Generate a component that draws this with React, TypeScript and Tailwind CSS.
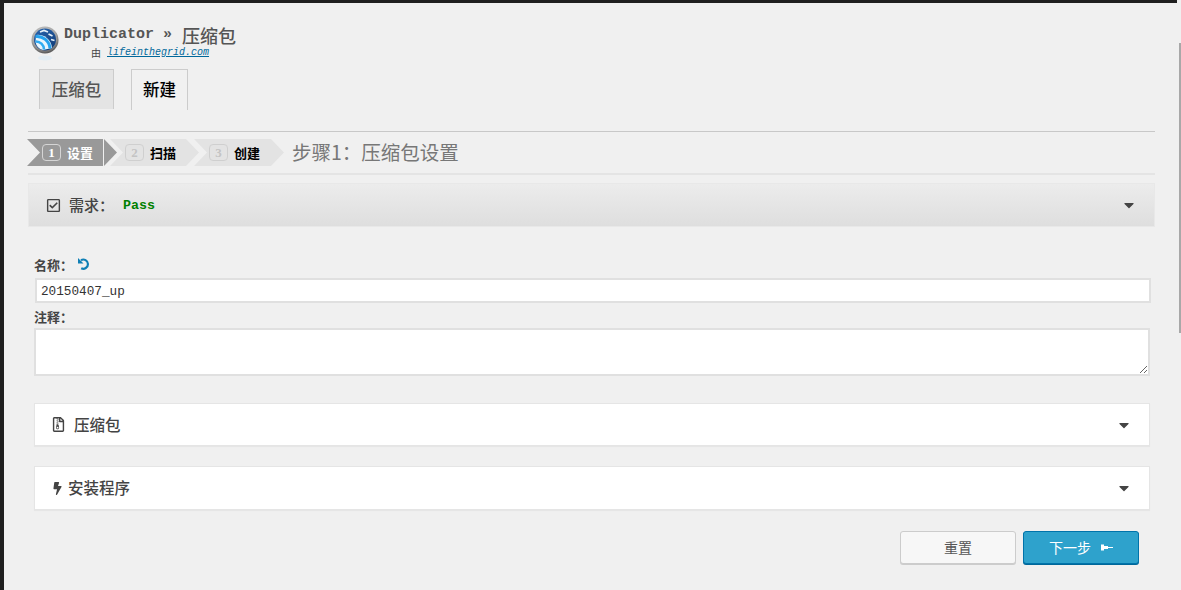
import React from "react";
import { FaRegCheckSquare, FaRegFileArchive, FaBolt, FaCaretDown } from "react-icons/fa";

const cjk = "font-['Noto_Sans_CJK_SC',sans-serif]";
const mono = "font-['Liberation_Mono','Noto_Sans_CJK_SC',monospace]";

function Logo() {
  return (
    <svg width="28" height="36" viewBox="0 0 28 36" className="shrink-0">
      <defs>
        <radialGradient id="rim" cx="45%" cy="35%" r="72%">
          <stop offset="0%" stopColor="#e2e2e2" />
          <stop offset="65%" stopColor="#a0a0a0" />
          <stop offset="100%" stopColor="#3a3a3a" />
        </radialGradient>
        <linearGradient id="face" x1="0" y1="0" x2="0.6" y2="1">
          <stop offset="0%" stopColor="#2a66b0" />
          <stop offset="100%" stopColor="#123f7c" />
        </linearGradient>
      </defs>
      <ellipse cx="14" cy="33" rx="7" ry="2.5" fill="#e2edf4" />
      <circle cx="14" cy="15" r="13.5" fill="url(#rim)" />
      <circle cx="14" cy="14.5" r="11" fill="url(#face)" />
      <path d="M5 10 A14 14 0 0 1 21 23 L12 25 A10 10 0 0 1 4.5 17 Z" fill="#eaf5fc" />
      <path d="M4.6 11.5 A13 13 0 0 1 19 23.5" fill="none" stroke="#25a2ee" strokeWidth="3" />
      <path d="M4.5 16.5 A8 8 0 0 1 13 24.5" fill="none" stroke="#2fabf2" strokeWidth="2.6" />
      <path d="M9 7 L13 5.5 L17 7 M17.5 9 L21.5 11 M20 14.5 L23.5 15.5" stroke="#e6f0f8" strokeWidth="1.7" fill="none" />
    </svg>
  );
}

function UndoIcon() {
  return (
    <svg width="14" height="14" viewBox="0 0 14 14" className="mt-[2px] ml-[4px] shrink-0">
      <path d="M4 3.2 A4.6 4.6 0 1 1 4.2 11.2" fill="none" stroke="#0f7fb5" strokeWidth="2.2" />
      <path d="M1 1 L1 6.5 L6.5 6.5 Z" fill="#0f7fb5" />
    </svg>
  );
}

function PinIcon() {
  return (
    <svg width="12" height="7" viewBox="0 0 12 7" className="shrink-0">
      <path d="M0 0.5 H3 V2 H7 V3 H12 V4 H7 V5 H3 V6.5 H0 Z" fill="#ffffff" />
    </svg>
  );
}

function Step({ n, label, active, widthClass, clip }: { n: string; label: string; active?: boolean; widthClass: string; clip: string }) {
  return (
    <div className={`flex h-[27px] items-center pl-[15px] ${widthClass} ${clip} ${active ? "bg-[#999999]" : "bg-[#e3e3e3]"}`}>
      <span
        className={`flex h-[17px] w-[19px] items-center justify-center rounded-[4px] border font-['Liberation_Serif',serif] text-[13px] font-bold ${
          active ? "border-[#d5d5d5] text-white" : "border-[#cfcfcf] text-[#c4c4c4]"
        }`}
      >
        {n}
      </span>
      <span className={`ml-[6px] ${cjk} text-[13px] font-bold ${active ? "text-white" : "text-black"}`}>{label}</span>
    </div>
  );
}

function Section({ icon, title, gap, heightClass }: { icon: React.ReactNode; title: string; gap: string; heightClass: string }) {
  return (
    <div className={`flex ${heightClass} items-center justify-between border border-[#e5e5e5] bg-white pl-[16px] pr-[17px] shadow-[0_1px_1px_rgba(0,0,0,0.04)]`}>
      <div className={`flex items-center ${gap}`}>
        {icon}
        <span className={`${cjk} text-[15.5px] font-medium text-[#444444]`}>{title}</span>
      </div>
      <FaCaretDown className="text-[16px] text-[#444444]" />
    </div>
  );
}

export default function App() {
  return (
    <div className="relative flex h-[590px] w-[1181px] overflow-hidden bg-[#f0f0f0]">
      <div className="absolute left-0 top-0 h-[3px] w-[1177px] bg-[#1f1f1f]" />
      <div className="absolute right-0 top-[43px] h-[290px] w-[2px] bg-[#a8a8a8]" />
      <div className="h-full w-[4px] shrink-0 bg-[#1f1f1f]" />

      <div className="ml-[24px] flex w-[1127px] flex-col pt-[25px]">
        {/* Header */}
        <div className="flex h-[36px] pl-[3px]">
          <Logo />
          <div className="ml-[5px] flex flex-col pt-[1px]">
            <div className="flex h-[18px] items-center text-[#555555]">
              <span className={`${mono} text-[15px] font-bold`}>Duplicator » </span>
              <span className={`${cjk} ml-[10px] text-[18px] font-medium leading-[18px]`}>压缩包</span>
            </div>
            <div className="ml-[27px] mt-[1px] flex h-[14px] items-center">
              <span className={`${cjk} text-[10px] text-[#444444]`}>由</span>
              <a className={`${mono} ml-[6px] text-[10px] italic text-[#00689b] underline`}>lifeinthegrid.com</a>
            </div>
          </div>
        </div>

        {/* Tabs */}
        <div className="mt-[8px] flex h-[41px] gap-[17px] pl-[11px]">
          <div className={`flex h-[40px] w-[75px] items-center justify-center border border-b-0 border-[#cccccc] bg-[#e4e4e4] ${cjk} text-[16.5px] font-medium text-[#555555]`}>
            压缩包
          </div>
          <div className={`flex h-[41px] w-[57px] items-center justify-center border border-b-0 border-[#cccccc] bg-[#f1f1f1] pb-[2px] ${cjk} text-[16.5px] font-medium text-black`}>
            新建
          </div>
        </div>

        {/* Wizard */}
        <div className="mt-[21px] border-t border-[#c8c8c8] pt-[7px]">
          <div className="-ml-[1px] flex h-[27px] items-center">
            <Step n="1" label="设置" active widthClass="w-[76px]" clip="[clip-path:polygon(0_0,100%_0,100%_100%,0_100%,13px_50%)]" />
            <div className="ml-[1px] h-[27px] w-[13px] bg-[#999999] [clip-path:polygon(0_0,100%_50%,0_100%)]" />
            <div className="-ml-[7px]">
              <Step n="2" label="扫描" widthClass="w-[89px]" clip="[clip-path:polygon(0_0,calc(100%-13px)_0,100%_50%,calc(100%-13px)_100%,0_100%,13px_50%)]" />
            </div>
            <div className="-ml-[5px]">
              <Step n="3" label="创建" widthClass="w-[90px]" clip="[clip-path:polygon(0_0,calc(100%-13px)_0,100%_50%,calc(100%-13px)_100%,0_100%,13px_50%)]" />
            </div>
            <span className={`ml-[8px] -mt-[2px] ${cjk} text-[19.5px] text-[#777777]`}>步骤1：压缩包设置</span>
          </div>
          <div className="mt-[7px] border-t-2 border-[#e4e4e4]" />
        </div>

        {/* Requirements */}
        <div className="mt-[8px] flex h-[44px] items-center justify-between border border-[#e8e8e8] bg-gradient-to-b from-[#ececec] to-[#dedede] pl-[17px] pr-[17px]">
          <div className="flex items-center">
            <FaRegCheckSquare className="text-[15px] text-[#444444]" />
            <span className={`ml-[8px] ${cjk} text-[15px] font-medium text-[#444444]`}>需求：</span>
            <span className={`ml-[9px] mt-[2px] ${mono} text-[13.3px] font-bold text-[#008000]`}>Pass</span>
          </div>
          <FaCaretDown className="text-[16px] text-[#444444]" />
        </div>

        {/* Form */}
        <div className="ml-[6px] w-[1117px]">
          <div className="mt-[28px] flex h-[23px] items-start">
            <label className={`${cjk} text-[13px] font-bold leading-[20px] text-[#444444]`}>名称：</label>
            <UndoIcon />
          </div>
          <input
            readOnly
            value="20150407_up"
            className={`ml-[1px] block h-[25px] w-[1116px] border-2 border-[#e0e0e0] bg-white pl-[4px] pt-[2px] ${mono} text-[12.7px] text-[#333333] outline-none`}
          />
          <label className={`mt-[4px] block h-[21px] ${cjk} text-[13px] font-bold leading-[20px] text-[#444444]`}>注释：</label>
          <textarea readOnly className="block h-[48px] w-[1116px] border-2 border-[#e0e0e0] bg-white outline-none" />

          <div className="mt-[27px] w-[1116px]">
            <Section icon={<FaRegFileArchive className="text-[15px] text-[#444444]" />} title="压缩包" gap="gap-[8px]" heightClass="h-[43px]" />
          </div>
          <div className="mt-[20px] w-[1116px]">
            <Section icon={<FaBolt className="text-[13px] text-[#444444]" />} title="安装程序" gap="gap-[4px]" heightClass="h-[44px]" />
          </div>

          <div className="mt-[21px] flex w-[1105px] justify-end gap-[7px]">
            <button className={`h-[33px] w-[116px] rounded-[3px] border border-[#cccccc] bg-[#f7f7f7] shadow-[0_1px_0_#cccccc] ${cjk} text-[14px] text-[#555555]`}>
              重置
            </button>
            <button className={`flex h-[33px] w-[116px] items-center justify-center gap-[10px] rounded-[3px] border border-[#0073aa] bg-[#2ea2cc] shadow-[0_1px_0_#006799] ${cjk} text-[14px] text-white`}>
              下一步
              <PinIcon />
            </button>
          </div>
        </div>
      </div>
    </div>
  );
}
